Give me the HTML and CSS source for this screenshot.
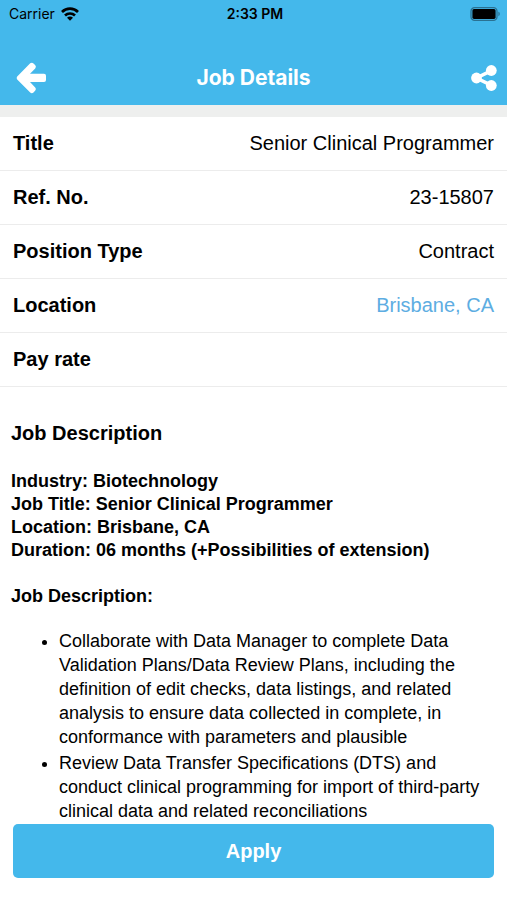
FILE: index.html
```html
<!DOCTYPE html>
<html lang="en">
<head>
    <meta charset="UTF-8">
    <meta name="viewport" content="width=device-width, initial-scale=1.0">
    <title>Job Details</title>
    <link rel="stylesheet" href="styles.css">
</head>
<body>
    <header>
        <div class="status-bar">
            <div class="carrier">
                <span>Carrier</span>
                <svg width="18" height="14" viewBox="0 0 18 14" fill="none" stroke="#000" stroke-width="2.7">
                    <path d="M1 5a11.4 11.4 0 0 1 16 0"/>
                    <path d="M4 8.5a7.2 7.2 0 0 1 10 0"/>
                    <path d="M9 13.8L6 10.8a4.2 4.2 0 0 1 6 0z" fill="#000" stroke="none"/>
                </svg>
            </div>
            <span class="time">2:33 PM</span>
            <div class="battery">
                <svg width="31" height="14" viewBox="0 0 31 14">
                    <rect x="1" y="0.7" width="26" height="12.6" rx="3.6" fill="none" stroke="#2a7192" stroke-width="1.3"/>
                    <rect x="2.4" y="2.1" width="23.2" height="9.8" rx="1.6" fill="#000"/>
                    <path d="M28.4 4.8c1.8.6 1.8 3.8 0 4.4z" fill="#2a7192"/>
                </svg>
            </div>
        </div>
        <nav class="nav-bar">
            <button class="icon-button" aria-label="Back">
                <svg width="30" height="32" viewBox="0 0 30 32" fill="#fff">
                    <path d="M1.2 14.6L14.2 1.3Q15.9 0 17.5 1.4L19.3 3.2Q20.6 4.8 19.2 6.4L14 11.8H28Q30 11.8 30 13.8V18Q30 20 28 20H14L19.2 25.4Q20.6 27 19.3 28.6L17.5 30.4Q15.9 31.8 14.2 30.5L1.2 17.4Q0 16 1.2 14.6z"/>
                </svg>
            </button>
            <h1>Job Details</h1>
            <button class="icon-button share" aria-label="Share">
                <svg width="26" height="26" viewBox="0 0 26 26" fill="#fff">
                    <path d="M20.5 5.6L5.4 13l15.1 7.4" fill="none" stroke="#fff" stroke-width="3.4"/>
                    <circle cx="20.3" cy="5.5" r="5.4"/>
                    <circle cx="5.5" cy="13" r="5.4"/>
                    <circle cx="20.3" cy="20.5" r="5.4"/>
                </svg>
            </button>
        </nav>
    </header>
    <main>
        <dl class="details">
            <div class="row">
                <dt>Title</dt>
                <dd>Senior Clinical Programmer</dd>
            </div>
            <div class="row">
                <dt>Ref. No.</dt>
                <dd>23-15807</dd>
            </div>
            <div class="row">
                <dt>Position Type</dt>
                <dd>Contract</dd>
            </div>
            <div class="row">
                <dt>Location</dt>
                <dd><a href="#">Brisbane, CA</a></dd>
            </div>
            <div class="row">
                <dt>Pay rate</dt>
                <dd></dd>
            </div>
        </dl>
        <section class="description">
            <h2>Job Description</h2>
            <p>
                Industry: Biotechnology<br>
                Job Title: Senior Clinical Programmer<br>
                Location: Brisbane, CA<br>
                Duration: 06 months (+Possibilities of extension)
            </p>
            <p>Job Description:</p>
            <ul>
                <li>Collaborate with Data Manager to complete Data Validation Plans/Data Review Plans, including the definition of edit checks, data listings, and related analysis to ensure data collected in complete, in conformance with parameters and plausible</li>
                <li>Review Data Transfer Specifications (DTS) and conduct clinical programming for import of third-party clinical data and related reconciliations</li>
            </ul>
        </section>
    </main>
    <footer>
        <button class="apply">Apply</button>
    </footer>
</body>
</html>
```
FILE: styles.css
```css
* {
    box-sizing: border-box;
}
body {
    display: flex;
    flex-direction: column;
    height: 100vh;
    margin: 0;
    font-family: "Liberation Sans", Arial, sans-serif;
    font-size: 18px;
    color: #000;
    background-color: #fff;
}
header {
    background-color: #44b8eb;
}
button {
    padding: 0;
    border: none;
    font-family: inherit;
    cursor: pointer;
}
svg {
    display: block;
}
.status-bar {
    display: grid;
    grid-template-columns: 1fr auto 1fr;
    align-items: center;
    height: 27px;
    padding: 0 6px 0 9px;
    font-family: Inter, sans-serif;
    font-size: 14px;
}
.carrier {
    display: flex;
    align-items: center;
    gap: 6px;
}
.time {
    font-weight: 600;
}
.battery {
    justify-self: end;
}
.nav-bar {
    display: grid;
    grid-template-columns: 40px 1fr 40px;
    align-items: center;
    height: 78px;
    padding: 23px 10px 0 16px;
}
.nav-bar h1 {
    margin: 0;
    padding-right: 6px;
    font-family: Inter, sans-serif;
    font-size: 21px;
    font-weight: 700;
    text-align: center;
    color: #fff;
}
.icon-button {
    justify-self: start;
    background: none;
}
.share {
    justify-self: end;
}
main {
    flex: 1;
    min-height: 0;
    overflow: hidden;
    border-top: 12px solid #eeefee;
}
.details {
    margin: 0;
    font-size: 20px;
}
.row {
    display: flex;
    align-items: center;
    justify-content: space-between;
    height: 54px;
    padding: 0 13px;
    border-bottom: 1px solid #ececec;
}
.row dt {
    font-weight: bold;
}
.row dd {
    margin: 0;
}
.row a {
    color: #5dade2;
    text-decoration: none;
}
.description {
    padding: 34px 11px 0;
}
.description h2 {
    margin: 0 0 25px;
    font-size: 20px;
    line-height: 24px;
}
.description p {
    margin: 0 0 23px;
    font-weight: bold;
    line-height: 23px;
}
.description p:last-of-type {
    margin-bottom: 21px;
}
.description ul {
    margin: 0;
    padding-left: 48px;
    line-height: 24px;
}
.description li + li {
    margin-top: 2px;
}
footer {
    padding: 0 13px 22px;
}
.apply {
    width: 100%;
    height: 54px;
    border-radius: 5px;
    background-color: #44b8eb;
    color: #fff;
    font-size: 20px;
    font-weight: bold;
}
```
